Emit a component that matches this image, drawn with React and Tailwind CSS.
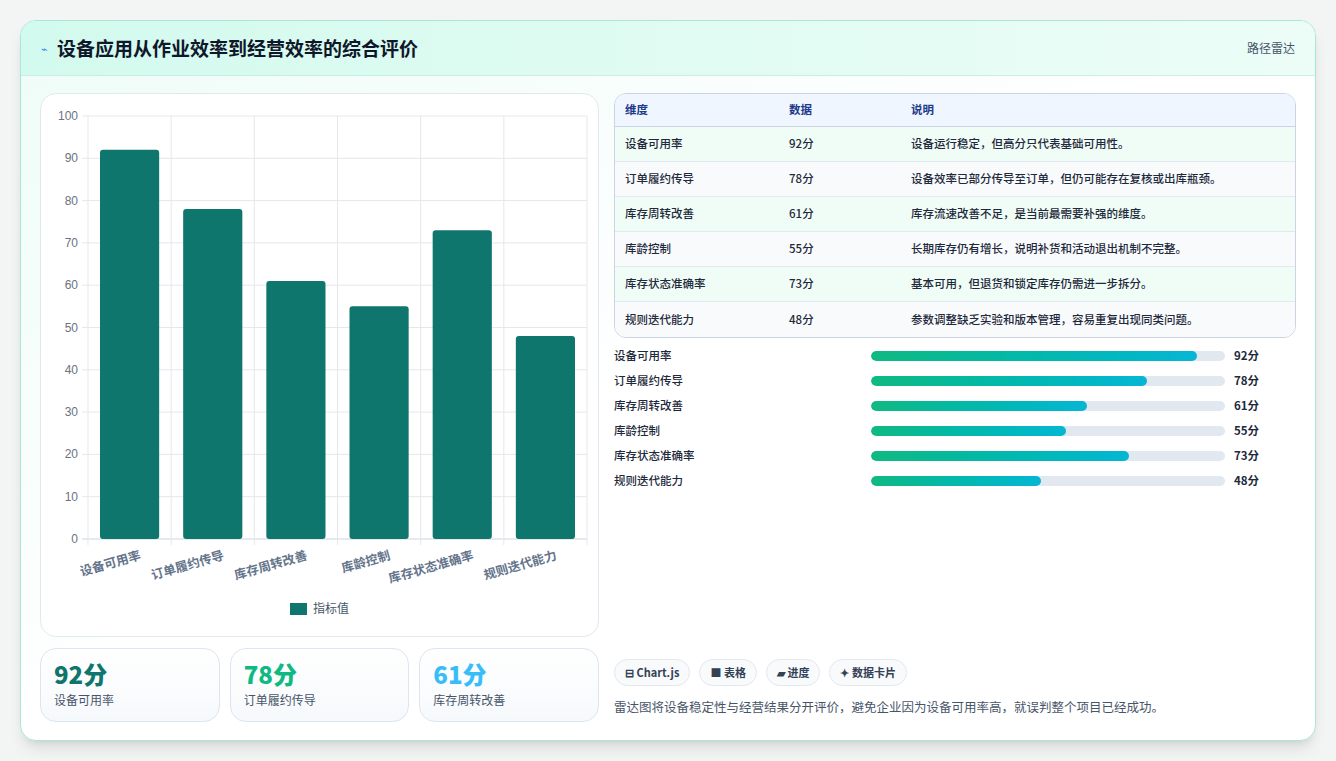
import React from 'react';

const DATA = [
  { name: '设备可用率', v: 92, desc: '设备运行稳定，但高分只代表基础可用性。' },
  { name: '订单履约传导', v: 78, desc: '设备效率已部分传导至订单，但仍可能存在复核或出库瓶颈。' },
  { name: '库存周转改善', v: 61, desc: '库存流速改善不足，是当前最需要补强的维度。' },
  { name: '库龄控制', v: 55, desc: '长期库存仍有增长，说明补货和活动退出机制不完整。' },
  { name: '库存状态准确率', v: 73, desc: '基本可用，但退货和锁定库存仍需进一步拆分。' },
  { name: '规则迭代能力', v: 48, desc: '参数调整缺乏实验和版本管理，容易重复出现同类问题。' },
];

function BarChart() {
  const L = 47, T = 22, W = 499, H = 423;
  const cw = W / 6;
  return (
    <svg width="558" height="543" className="block">
      {[0,1,2,3,4,5,6,7,8,9,10].map(i => {
        const y = T + H - (i * 10 / 100) * H;
        return (
          <g key={i}>
            <line x1={L - 6} x2={L + W} y1={y} y2={y} stroke={i === 0 ? '#cbd5e1' : '#e5e7eb'} />
            <text x={L - 10} y={y + 4} textAnchor="end" fontSize="12" fill="#6b7280" fontFamily="Liberation Sans, sans-serif">{i * 10}</text>
          </g>
        );
      })}
      {[0,1,2,3,4,5,6].map(i => (
        <line key={i} x1={L + i * cw} x2={L + i * cw} y1={T} y2={T + H + 6} stroke="#e5e7eb" />
      ))}
      {DATA.map((d, i) => {
        const h = d.v / 100 * H;
        const x = L + i * cw + 12;
        return <rect key={i} x={x} y={T + H - h} width={cw - 24} height={h} rx="3" fill="#0f766e" />;
      })}
      {DATA.map((d, i) => {
        const x = L + (i + 0.5) * cw + 12;
        return (
          <text key={i} x={x} y={T + H + 20} textAnchor="end" fontSize="12.5" fontWeight="700" fill="#64748b"
            transform={`rotate(-16 ${x} ${T + H + 20})`} fontFamily="Noto Sans CJK SC, sans-serif">{d.name}</text>
        );
      })}
      <rect x="249" y="509" width="17" height="12" fill="#0f766e" />
      <text x="272" y="519" fontSize="12" fill="#475569" fontFamily="Noto Sans CJK SC, sans-serif">指标值</text>
    </svg>
  );
}

function Stat({ v, label, color }) {
  return (
    <div className="flex-1 h-[74px] rounded-2xl border border-[#dbe6f0] bg-gradient-to-b from-white to-[#f6f9fc] px-[13px] pt-[10px]">
      <div className={`text-[24px] leading-[30px] font-extrabold ${color}`}>{v}</div>
      <div className="text-[12px] text-[#475569] mt-[2px]">{label}</div>
    </div>
  );
}

export default function App() {
  return (
    <div className="w-[1336px] h-[761px] bg-[#f3f4f4] pt-[20px] px-[20px]" style={{ fontFamily: '"Noto Sans CJK SC", "Noto Sans", sans-serif' }}>
      <div className="w-[1296px] h-[721px] rounded-2xl border border-[#a7e8d6] bg-gradient-to-br from-[#eefcf7] via-white to-white overflow-hidden shadow-lg">
        <div className="h-[55px] flex items-center justify-between px-[20px] bg-gradient-to-r from-[#d3faee] to-[#ecfdf7] border-b border-[#c9efe3]">
          <div className="flex items-center gap-[9px]">
            <span className="text-[11px] text-[#3b82f6]">⌁</span>
            <span className="text-[19px] font-bold text-[#0f172a]">设备应用从作业效率到经营效率的综合评价</span>
          </div>
          <span className="text-[12px] text-[#475569]">路径雷达</span>
        </div>
        <div className="flex gap-[15px] px-[19px] pt-[17px]">
          <div className="w-[559px] flex flex-col gap-[11px]">
            <div className="h-[544px] rounded-2xl border border-[#e2e8f0] bg-white overflow-hidden"><BarChart /></div>
            <div className="flex gap-[10px]">
              <Stat v="92分" label="设备可用率" color="text-[#0f766e]" />
              <Stat v="78分" label="订单履约传导" color="text-[#10b981]" />
              <Stat v="61分" label="库存周转改善" color="text-[#38bdf8]" />
            </div>
          </div>
          <div className="flex-1 flex flex-col">
            <div className="rounded-xl border border-[#cbd5e1] overflow-hidden text-[11.5px] text-[#1e293b]">
              <div className="h-[33px] flex items-center bg-[#eff6ff] border-b border-[#cbd5e1] text-[#1e3a8a] font-bold">
                <div className="w-[174px] pl-[10px]">维度</div>
                <div className="w-[122px]">数据</div>
                <div>说明</div>
              </div>
              {DATA.map((d, i) => (
                <div key={i} className={`h-[35px] flex items-center font-medium ${i % 2 ? 'bg-[#f8fafc]' : 'bg-[#f0fdf6]'} ${i < 5 ? 'border-b border-[#e2e8f0]' : ''}`}>
                  <div className="w-[174px] pl-[10px]">{d.name}</div>
                  <div className="w-[122px]">{d.v}分</div>
                  <div>{d.desc}</div>
                </div>
              ))}
            </div>
            <div className="mt-[10px] flex flex-col gap-[9px]">
              {DATA.map((d, i) => (
                <div key={i} className="h-[16px] flex items-center text-[11.5px] font-medium text-[#1e293b]">
                  <div className="w-[257px]">{d.name}</div>
                  <div className="w-[354px] h-[10px] rounded-full bg-[#e2e8f0] overflow-hidden">
                    <div className="h-full rounded-full bg-gradient-to-r from-[#10b981] to-[#06b6d4]" style={{ width: `${d.v}%` }} />
                  </div>
                  <div className="ml-[9px] font-bold">{d.v}分</div>
                </div>
              ))}
            </div>
            <div className="mt-[170px] flex gap-[9px] text-[11px] font-bold text-[#334155]">
              <span className="h-[27px] px-[10px] flex items-center rounded-full border border-[#e2e8f0] bg-[#f8fafc]">⊟ Chart.js</span>
              <span className="h-[27px] px-[10px] flex items-center rounded-full border border-[#e2e8f0] bg-[#f8fafc]">■ 表格</span>
              <span className="h-[27px] px-[10px] flex items-center rounded-full border border-[#e2e8f0] bg-[#f8fafc]">▰ 进度</span>
              <span className="h-[27px] px-[10px] flex items-center rounded-full border border-[#e2e8f0] bg-[#f8fafc]">✦ 数据卡片</span>
            </div>
            <div className="mt-[12px] text-[12.5px] text-[#475569]">雷达图将设备稳定性与经营结果分开评价，避免企业因为设备可用率高，就误判整个项目已经成功。</div>
          </div>
        </div>
      </div>
    </div>
  );
}
